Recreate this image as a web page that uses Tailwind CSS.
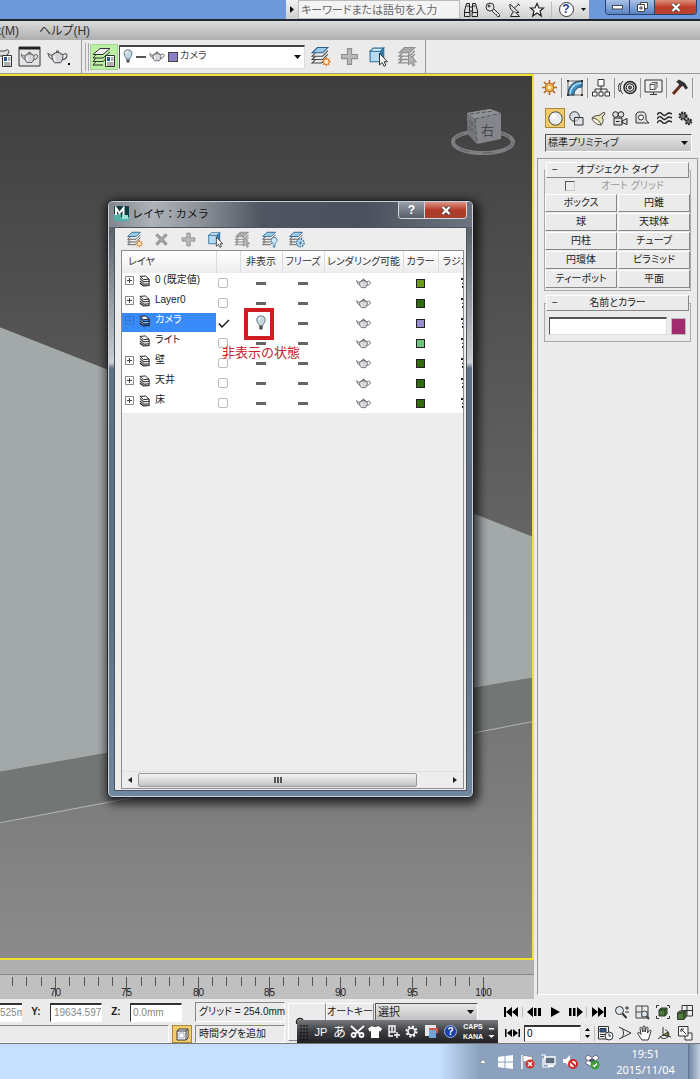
<!DOCTYPE html>
<html lang="ja">
<head>
  <meta charset="UTF-8" />
  <title>レイヤ：カメラ</title>
  <script src="https://cdn.jsdelivr.net/npm/@tailwindcss/browser@4"></script>
</head>
<body class="min-h-screen flex flex-col bg-[#ebebeb] text-[#222] text-[10px] leading-4 font-['Liberation_Sans','Noto_Sans_CJK_JP',sans-serif] [font-feature-settings:'palt']">

  <!-- shared icons -->
  <svg width="0" height="0" class="absolute" aria-hidden="true">
    <symbol id="teapot" viewBox="0 0 20 14">
      <path d="M5 5C3 6 2 4 0.8 3.2C1.5 6 2.5 8.5 5.5 9.5" fill="#d8dade" stroke="#444" stroke-width="0.9"/>
      <path d="M14.5 5.2C17 2.8 19.5 4 19 6.2C18.5 8.4 16.5 9.6 14 9.7" fill="none" stroke="#444" stroke-width="1"/>
      <path d="M5.5 4.5C7 3 13 3 14.5 4.5C16 7.5 14.5 10.5 12.8 12.5H7.2C5.5 10.5 4 7.5 5.5 4.5Z" fill="#d3d5da" stroke="#444" stroke-width="0.9"/>
      <path d="M6.5 3.8C8 2.4 12 2.4 13.5 3.8M9.2 2.4V1.2H10.8V2.4" fill="#fff" stroke="#333" stroke-width="0.9"/>
      <path d="M7 6C6.6 8 7.2 9.5 8 11" fill="none" stroke="#fff" stroke-width="1.2"/>
    </symbol>
    <symbol id="bulb" viewBox="0 0 12 18">
      <path d="M4 12C4 10 1.2 8.5 1.2 5.4C1.2 2.8 3.2 1 6 1S10.800 2.800 10.800 5.400C10.800 8.500 8 10 8 12Z" fill="#c6d8e4" stroke="#55646e" stroke-width="1"/>
      <path d="M3.500 5.500C3.500 4 4.300 3 5.600 2.800" fill="none" stroke="#fff" stroke-width="1.300"/>
      <path d="M4 12.500H8V15L6.800 16.500H5.200L4 15Z" fill="#555"/>
    </symbol>
    <symbol id="layer" viewBox="0 0 12 13">
      <path d="M1 1.500L7 1L11 4.500L5 5Z" fill="#fff" stroke="#111" stroke-width="1"/>
      <path d="M1 4L5 7.500L11 7V4.500M1 6.500L5 10L11 9.500V7M1 9L5 12L11 11.500V9.500" fill="none" stroke="#111" stroke-width="1.200"/>
      <path d="M1.500 5L5 8.200H10.500M1.500 7.600L5 10.800" fill="none" stroke="#fff" stroke-width="0.600"/>
    </symbol>
    <symbol id="sheets" viewBox="0 0 20 20">
      <path d="M7 1.500H17L12 6.500H2Z" fill="#9ccbe8" stroke="#2a5f8a" stroke-width="1"/>
      <path d="M5 6.800L2 9.700H12L17 4.500M5 10L2 12.900H12L17 7.700M5 13.200L2 16.100H11L16 11.200" fill="none" stroke="#4a4a4a" stroke-width="1"/>
    </symbol>
    <symbol id="sheets-off" viewBox="0 0 20 20">
      <path d="M7 1.500H17L12 6.500H2Z" fill="#aaa" stroke="#8d8d8d" stroke-width="1"/>
      <path d="M5 6.800L2 9.700H12L17 4.500M5 10L2 12.900H12L17 7.700M5 13.200L2 16.100H11L16 11.200" fill="none" stroke="#8d8d8d" stroke-width="1.300"/>
      <path d="M11 7V18L13.500 15.700L15.200 19.200L17 18.300L15.300 15H18.500Z" fill="#b5b5b5" stroke="#8a8a8a" stroke-width="0.900"/>
    </symbol>
    <symbol id="layer-new" viewBox="0 0 20 20">
      <use href="#sheets"/>
      <path d="M15.500 10.500V19.500M11 15H20M12.500 12L18.500 18M18.500 12L12.500 18" stroke="#d97a22" stroke-width="1"/>
      <circle cx="15.500" cy="15" r="2.600" fill="#fff2d0" stroke="#d97a22"/>
    </symbol>
    <symbol id="layer-bulb" viewBox="0 0 20 20">
      <use href="#sheets"/>
      <path d="M14.500 15.500C14.500 14 12 13 12 10.900A3.500 3.500 0 0 1 19 10.900C19 13 16.500 14 16.500 15.500V19H14.500Z" fill="#cfe6f5" stroke="#3f7ea8" stroke-width="1"/>
    </symbol>
    <symbol id="layer-snow" viewBox="0 0 20 20">
      <use href="#sheets"/>
      <circle cx="14.500" cy="14" r="4.500" fill="#cfe6f5" stroke="#3f7ea8" stroke-width="1.600" stroke-dasharray="2 1"/>
      <path d="M14.500 11V17M12 12.500L17 15.500M17 12.500L12 15.500" stroke="#3f7ea8" stroke-width="0.800"/>
    </symbol>
    <symbol id="plus" viewBox="0 0 20 20">
      <path d="M8 2.500H12V8H17.500V12H12V17.500H8V12H2.500V8H8Z" fill="#b9b9b9" stroke="#8e8e8e"/>
    </symbol>
    <symbol id="cross" viewBox="0 0 20 20">
      <path d="M4 4L16 16M16 4L4 16" stroke="#8f8f8f" stroke-width="3.600"/>
      <path d="M4.500 4.500L15.500 15.500M15.500 4.500L4.500 15.500" stroke="#a9a9a9" stroke-width="1.600"/>
    </symbol>
    <symbol id="cube-pick" viewBox="0 0 20 20">
      <path d="M2 5H12V15H2Z" fill="#b5dcf2" stroke="#2b6d9c"/>
      <path d="M2 5L5 2H15L12 5Z" fill="#dff1fa" stroke="#2b6d9c"/>
      <path d="M12 5L15 2V12L12 15Z" fill="#2f86bd" stroke="#2b6d9c"/>
      <path d="M11 7V18L13.500 15.700L15.200 19.200L17 18.300L15.300 15H18.500Z" fill="#fff" stroke="#222" stroke-width="0.900"/>
    </symbol>
    <symbol id="caret" viewBox="0 0 7 4"><path d="M0 0H7L3.500 4Z" fill="#111"/></symbol>
    <symbol id="doc" viewBox="0 0 10 12">
      <path d="M0.500 0.500H9.500V11.500H0.500Z" fill="#fff" stroke="#333"/>
      <path d="M2 2H5V6H2Z" fill="#2b5a94"/><path d="M6 3H8.500M6 5H8.500M2 8H8.500M2 10H8.500" stroke="#333" stroke-width="0.800"/>
    </symbol>
  </svg>

  <!-- title bar -->
  <header class="flex h-[21px] border-b-2 border-[#20262e] bg-[#6d98da]">
    <div class="flex-1"></div>
    <div class="flex items-center bg-linear-to-b from-[#f2f2f2] to-[#cfcfcf]">
      <button class="w-3 flex justify-center" aria-label="検索を折りたたむ"><svg width="4" height="7" viewBox="0 0 4 7"><path d="M0 0L4 3.500L0 7Z" fill="#111"/></svg></button>
      <input type="text" aria-label="検索" placeholder="キーワードまたは語句を入力" class="w-[162px] h-[19px] px-0.5 border border-[#bbb] bg-[#f3f3f3] text-[11px] placeholder:text-[#666]" />
      <button class="w-[22px] flex justify-center" aria-label="検索実行">
        <svg width="16" height="16" viewBox="0 0 16 16" fill="#ddd" stroke="#222"><path d="M3.500 1.500H6.500V6L7 14.500H1.500V9Z"/><path d="M12.500 1.500H9.500V6L9 14.500H14.500V9Z"/><path d="M6.500 5H9.500V9H6.500ZM2 10.500H7M9 10.500H14M3.500 4H6.500M9.500 4H12.500"/></svg>
      </button>
      <button class="w-[22px] flex justify-center" aria-label="サブスクリプション">
        <svg width="16" height="16" viewBox="0 0 16 16" fill="#e4e4e4" stroke="#333"><path d="M7.500 5.500L14.500 12.500V14.500H12.500L11.500 13.500V12.500H10.500L5.500 7.500"/><circle cx="5" cy="5" r="4"/><circle cx="4" cy="4" r="1" fill="#777"/></svg>
      </button>
      <button class="w-[22px] flex justify-center" aria-label="通信センター">
        <svg width="16" height="16" viewBox="0 0 16 16" fill="#ddd" stroke="#222"><path d="M3 2C2 7 6 11.500 12 10.500Z"/><path d="M7.500 6L12 2M10.500 1.500L13 3.500M6 10L3.500 14.500H12.500L9 10.500"/></svg>
      </button>
      <button class="w-[22px] flex justify-center" aria-label="お気に入り">
        <svg width="16" height="16" viewBox="0 0 16 16" fill="#fafafa" stroke="#222" stroke-width="1.200"><path d="M8 1.500L10 6H14.500L11 9L12.300 14L8 11L3.700 14L5 9L1.500 6H6Z"/></svg>
      </button>
      <div class="w-px h-4 mx-[3px] bg-[#bbb]"></div>
      <button class="w-[22px] flex justify-center" aria-label="ヘルプ">
        <span class="size-[15px] rounded-full border border-[#333] bg-white text-[#1c3f9c] text-[12px] leading-[13px] font-bold">?</span>
      </button>
      <button class="w-3 flex justify-center" aria-label="ヘルプメニュー"><svg width="5" height="3"><use href="#caret"/></svg></button>
    </div>
    <div class="flex h-[15px] ml-[16px] mr-[3px] rounded-b border border-t-0 border-[#27436e] overflow-hidden">
      <button class="w-6 flex justify-center items-center bg-linear-to-b from-[#a9c2e8] to-[#5a83c4] border-r border-[#27436e]" aria-label="最小化"><svg width="11" height="5"><rect x="0.500" y="0.500" width="10" height="3.500" fill="#fff" stroke="#444"/></svg></button>
      <button class="w-[25px] flex justify-center items-center bg-linear-to-b from-[#a9c2e8] to-[#5a83c4] border-r border-[#27436e]" aria-label="元に戻す"><svg width="11" height="10" fill="#fff" stroke="#444"><path d="M3.500 0.500H10.500V6.500H3.500Z"/><path d="M0.500 2.500H7.500V9.500H0.500Z"/><path d="M3 5H5V7H3Z"/></svg></button>
      <button class="w-[41px] flex justify-center items-center bg-linear-to-b from-[#dd8d7c] via-[#bf3d2a] to-[#b5432f]" aria-label="閉じる"><svg width="10" height="9" viewBox="0 0 10 9"><path d="M1.500 1L8.500 8M8.500 1L1.500 8" stroke="#444" stroke-width="3.600"/><path d="M1.500 1L8.500 8M8.500 1L1.500 8" stroke="#fff" stroke-width="2.200"/></svg></button>
    </div>
  </header>

  <!-- menu bar -->
  <nav class="flex h-[19px] items-center gap-5 bg-linear-to-b from-[#dcdcdc] to-[#aeaeae] text-[12px] text-[#333]">
    <button class="w-[19px] flex justify-end whitespace-nowrap overflow-hidden">t(M)</button>
    <button>ヘルプ(H)</button>
  </nav>

  <!-- main toolbar -->
  <div class="flex h-[34px] items-center border-b border-[#999] overflow-hidden">
    <div class="flex h-full w-[82px] items-center border-r border-[#999]">
      <button class="w-[18px]" aria-label="レンダリング設定">
        <svg width="13" height="22" viewBox="0 0 13 22"><path d="M0 5H5C8 2 10 5 8 8L6 10H0" fill="#ddd" stroke="#444"/><use href="#doc" x="2" y="9" width="10" height="12"/></svg>
      </button>
      <button class="w-[24px]" aria-label="レンダリング フレーム">
        <svg width="23" height="21" viewBox="0 0 23 21"><path d="M1 1H22V20H1Z" fill="#e4e4e4" stroke="#333"/><path d="M1 1H22V3.500H1Z" fill="#222"/><use href="#teapot" x="2.500" y="5" width="18" height="13"/></svg>
      </button>
      <button class="w-[32px] flex justify-center items-end" aria-label="レンダリング">
        <svg width="21" height="16"><use href="#teapot"/></svg>
        <span class="size-0.5 bg-black"></span>
      </button>
    </div>
    <div class="flex h-full flex-initial items-center gap-px pl-[3px] border-r border-[#999]">
      <div class="w-1 h-7 border-x border-[#aaa]"></div>
      <button class="w-7 h-[26px] flex justify-center items-center bg-[#bcf0a4] border border-[#a6d494]" aria-label="レイヤ管理">
        <svg width="24" height="22" viewBox="0 0 24 22"><path d="M8 2.500H18L11 8.500H1Z" fill="#eee" stroke="#333"/><path d="M4 8.500L1 12H11L18 6M4 12L1 15.500H11L18 9.500M4 15.500L1 19H11" fill="none" stroke="#333"/><use href="#doc" x="13" y="9" width="10" height="12"/></svg>
      </button>
      <div class="relative w-[186px]">
        <select aria-label="現在のレイヤ" class="appearance-none block w-full h-6 pl-[60px] pb-0.5 bg-white border border-[#ddd] border-t-2 border-t-[#444] border-l-[#444] text-[10px] text-[#444]"><option>カメラ</option></select>
        <div class="absolute inset-y-0 left-1 flex items-center gap-[3px] pointer-events-none">
          <svg width="10" height="15"><use href="#bulb"/></svg>
          <span class="w-2.5 h-0.5 bg-[#555]"></span>
          <svg width="16" height="11"><use href="#teapot"/></svg>
          <span class="size-[10px] bg-[#8a80c8] border border-[#444]"></span>
        </div>
        <svg class="absolute right-1 top-2.5 pointer-events-none" width="7" height="4"><use href="#caret"/></svg>
      </div>
      <div class="flex pr-[3px]">
        <button class="w-[29px] flex justify-center" aria-label="新規レイヤ"><svg width="21" height="21"><use href="#layer-new"/></svg></button>
        <button class="w-[29px] flex justify-center" aria-label="レイヤに追加"><svg width="21" height="21"><use href="#plus"/></svg></button>
        <button class="w-[29px] flex justify-center" aria-label="オブジェクトを選択"><svg width="21" height="21"><use href="#cube-pick"/></svg></button>
        <button class="w-[29px] flex justify-center" aria-label="レイヤを設定"><svg width="21" height="21"><use href="#sheets-off"/></svg></button>
      </div>
    </div>
  </div>

  <main class="flex flex-1">
    <div class="flex-1 min-w-0 flex flex-col">
      <!-- viewport -->
      <div class="relative flex-1 min-h-[884px] border-2 border-l-0 border-[#f0e030] overflow-hidden">
        <svg class="absolute inset-0 size-full" viewBox="0 76 532 881" preserveAspectRatio="none">
          <defs>
            <linearGradient id="sky" x1="0" y1="0" x2="0" y2="1"><stop offset="0" stop-color="#3e3e3e"/><stop offset="0.500" stop-color="#636363"/><stop offset="1" stop-color="#8b8b8b"/></linearGradient>
          </defs>
          <path d="M0 76H532V957H0Z" fill="url(#sky)"/>
          <path d="M0 327L532 536V677L0 771Z" fill="#a3a8a9"/>
          <path d="M0 771L532 677V721L0 822Z" fill="#727675"/>
          <path d="M0 822L532 721" stroke="#b4b6b6"/>
        </svg>

        <!-- view cube -->
        <svg class="absolute top-[29px] right-[14px]" width="70" height="52" viewBox="0 0 70 52">
          <ellipse cx="35" cy="37" rx="30" ry="11" fill="none" stroke="#7c7e82" stroke-width="4"/>
          <ellipse cx="35" cy="37" rx="30" ry="11" fill="none" stroke="#5d5f63" stroke-width="1" stroke-dasharray="10 14"/>
          <path d="M19 8L42 4L53 8V34L29 39L20 29Z" fill="#84868b"/>
          <path d="M19 8L42 4L53 8L27 14Z" fill="#8f9196"/>
          <path d="M19 8L27 14L29 39L20 29Z" fill="#74767b"/>
          <path d="M27 14L53 8M27 14L29 39M22 9L46 6M22 15V25M24 17V27" stroke="#56585d" stroke-dasharray="4 2"/>
          <text x="33" y="30" font-size="13" fill="#45474c">右</text>
        </svg>

        <!-- layer dialog -->
        <section class="absolute left-[107px] top-[124px] w-[367px] h-[598px] flex flex-col rounded-md border border-[#222] p-px bg-[#c9d2dc] shadow-[2px_3px_10px_3px_#000000b0]">
          <div class="flex-1 min-h-0 flex flex-col px-[5px] pb-[5px] rounded bg-[linear-gradient(#6a7078,#5c646e_5%,#c4c8cc_26%,#d0d4d8_27%,#5f7186_28%,#607086_70%,#6f87a0_100%)]">
            <header class="-mx-[5px] flex h-[25px] items-start pl-[5px] pr-[5px] rounded-t bg-[linear-gradient(90deg,#80868e,#aeb3b9_12%,#8c9199_25%,#4e5661_42%,#4a515c_70%,#6b7480_100%)]">
              <svg class="mt-1" width="15" height="15" viewBox="0 0 15 15"><path d="M0 0H15V15H0Z" fill="#123c40"/><path d="M0 8H7V15H0ZM7 11H15V15H7Z" fill="#4fb0a5"/><path d="M2 9V2L5.500 7L9.500 2V9" fill="none" stroke="#fff" stroke-width="2"/><path d="M8 9H14V13H8Z" fill="#9be0d5"/></svg>
              <h1 class="flex-1 ml-[3px] mt-1 text-[11px] text-[#111] [font-feature-settings:normal]">レイヤ：カメラ</h1>
              <div class="flex h-[17px] rounded-b border border-t-0 border-[#d5d9de] overflow-hidden">
                <button class="w-[26px] bg-linear-to-b from-[#9aa0a8] to-[#565d67] text-white text-[12px] font-bold border-r border-[#d5d9de]" aria-label="ヘルプ">?</button>
                <button class="w-[41px] flex justify-center items-center bg-linear-to-b from-[#dd9485] via-[#b23a28] to-[#a3402f]" aria-label="閉じる"><svg width="10" height="9" viewBox="0 0 10 9"><path d="M1.500 1L8.500 8M8.500 1L1.500 8" stroke="#444" stroke-width="3.600"/><path d="M1.500 1L8.500 8M8.500 1L1.500 8" stroke="#fff" stroke-width="2.200"/></svg></button>
              </div>
            </header>

            <div class="flex-1 min-h-0 flex flex-col border border-[#4b535d] bg-[#ededed] pl-[6px] pr-[2px] pb-px">
              <div class="flex h-[22px] items-center">
                <button class="w-[27px] flex justify-center" aria-label="新規レイヤを作成"><svg width="17" height="17"><use href="#layer-new"/></svg></button>
                <button class="w-[27px] flex justify-center" aria-label="空のレイヤを削除"><svg width="17" height="17"><use href="#cross"/></svg></button>
                <button class="w-[27px] flex justify-center" aria-label="選択オブジェクトを追加"><svg width="17" height="17"><use href="#plus"/></svg></button>
                <button class="w-[27px] flex justify-center" aria-label="オブジェクトを選択"><svg width="17" height="17"><use href="#cube-pick"/></svg></button>
                <button class="w-[27px] flex justify-center" aria-label="レイヤをハイライト"><svg width="17" height="17"><use href="#sheets-off"/></svg></button>
                <button class="w-[27px] flex justify-center" aria-label="すべて非表示"><svg width="17" height="17"><use href="#layer-bulb"/></svg></button>
                <button class="w-[27px] flex justify-center" aria-label="すべてフリーズ"><svg width="17" height="17"><use href="#layer-snow"/></svg></button>
              </div>

              <div class="relative flex-1 min-h-0 flex flex-col border border-[#8a8e94] overflow-hidden">
                <table class="table-fixed w-full bg-white">
                  <colgroup><col class="w-[94px]"><col class="w-6"><col class="w-[42px]"><col class="w-[42px]"><col class="w-[79px]"><col class="w-[35px]"><col></colgroup>
                  <thead class="bg-linear-to-b from-white to-[#ececec]">
                    <tr class="h-[22px] text-[#333] whitespace-nowrap">
                      <th class="font-normal text-left pl-1.5 border-r border-[#ddd]">レイヤ</th>
                      <th class="border-r border-[#ddd]"></th>
                      <th class="font-normal border-r border-[#ddd]">非表示</th>
                      <th class="font-normal border-r border-[#ddd]">フリーズ</th>
                      <th class="font-normal border-r border-[#ddd]">レンダリング可能</th>
                      <th class="font-normal border-r border-[#ddd]">カラー</th>
                      <th class="font-normal text-left pl-1 overflow-hidden">ラジオ</th>
                    </tr>
                  </thead>
                  <tbody id="layers"></tbody>
                </table>

                <div class="flex-1"></div>
                <!-- horizontal scroll bar -->
                <div class="flex h-[17px] items-center px-1.5 gap-1.5 border-t border-[#e2e2e2]">
                  <svg width="4" height="6" viewBox="0 0 4 6"><path d="M4 0L0 3L4 6Z" fill="#222"/></svg>
                  <div class="w-[279px] h-3.5 flex justify-center items-center gap-px border border-[#999] rounded-xs bg-linear-to-b from-[#f2f2f2] via-[#dcdcdc] to-[#bfc1c5]">
                    <span class="w-0.5 h-1.5 bg-[#555]"></span><span class="w-0.5 h-1.5 bg-[#555]"></span><span class="w-0.5 h-1.5 bg-[#555]"></span>
                  </div>
                  <svg class="ml-auto" width="4" height="6" viewBox="0 0 4 6"><path d="M0 0L4 3L0 6Z" fill="#222"/></svg>
                </div>

                <!-- callout -->
                <div class="absolute left-[122px] top-[57px] w-[30px] h-[32px] border-4 border-[#cc1c24]"></div>
                <p class="absolute left-[100px] top-[94px] text-[13px] leading-4 text-[#c8202c] whitespace-nowrap [font-feature-settings:normal]">非表示の状態</p>
              </div>
            </div>
          </div>
        </section>
      </div>

      <!-- time slider and track bar -->
      <div class="h-[15px] bg-[#afafaf] border-b border-[#888]"></div>
      <svg class="w-full bg-[#c0c0c0]" height="24" viewBox="0 975 534 24" preserveAspectRatio="xMinYMin slice">
        <g id="ticks" stroke="#555"></g>
        <g id="labels" font-size="10" fill="#222" text-anchor="middle"></g>
      </svg>
    </div>

    <!-- command panel -->
    <aside class="w-[166px] flex flex-col pl-[3px] bg-[#ebebeb]">
      <div class="flex h-[25px] items-center pt-0.5">
        <button class="w-[25px] h-5 flex justify-center items-center border-r border-[#999]" aria-label="作成"><svg width="17" height="17" viewBox="0 0 17 17"><path d="M8.500 1V16M1 8.500H16M3 3L14 14M14 3L3 14" stroke="#b5651d" stroke-width="1.600"/><circle cx="8.500" cy="8.500" r="4.200" fill="#f0b050" stroke="#b5651d"/><circle cx="8.500" cy="8.500" r="1.800" fill="#fff0b0"/></svg></button>
        <button class="w-[26px] h-5 flex justify-center items-center border-r border-[#999]" aria-label="修正"><svg width="18" height="18" viewBox="0 0 18 18"><path d="M2 16C2 7 7 2 16 2V8C11 8 8 11 8 16Z" fill="#3f8ec4" stroke="#1c3f5c"/><path d="M4 16C4 9 9 4 16 4" fill="none" stroke="#b0dcf4" stroke-width="1.500"/><path d="M2 2H16V16H2Z" fill="none" stroke="#444" stroke-width="0.800"/><path d="M1 1H3V3H1ZM15 1H17V3H15ZM1 15H3V17H1ZM15 15H17V17H15Z" fill="#333"/></svg></button>
        <button class="w-[27px] h-5 flex justify-center items-center border-r border-[#999]" aria-label="階層"><svg width="18" height="18" viewBox="0 0 18 18" fill="#fff" stroke="#333"><path d="M9 7V10M3 13V10H15V13M9 10V13" fill="none"/><path d="M6 0.500H12V7H6ZM0.500 13H5V17H0.500ZM7 13H11V17H7ZM13 13H17.500V17H13Z"/></svg></button>
        <button class="w-[26px] h-5 flex justify-center items-center border-r border-[#999]" aria-label="モーション"><svg width="19" height="17" viewBox="0 0 19 17" fill="none" stroke="#222"><circle cx="12" cy="8.500" r="6" fill="#ccc" stroke-width="1.500"/><circle cx="12" cy="8.500" r="3.800" fill="#eee"/><circle cx="12" cy="8.500" r="1.500" fill="#777"/><path d="M5 2C1.500 5 1.500 12 5 15M2 4C0 7 0 10 2 13"/></svg></button>
        <button class="w-[26px] h-5 flex justify-center items-center border-r border-[#999]" aria-label="表示"><svg width="19" height="17" viewBox="0 0 19 17" fill="#eee" stroke="#333"><path d="M1 1H18V13H1ZM6 15.500H13M9.500 13V15"/><path d="M6 5.500L8 3.500H13V8.500L11 10.500H6ZM6 5.500H11V10.500M11 5.500L13 3.500" stroke-width="0.800"/></svg></button>
        <button class="w-[26px] h-5 flex justify-center items-center border-r border-[#999]" aria-label="ユーティリティ"><svg width="18" height="17" viewBox="0 0 18 17"><path d="M10 6L2 15" stroke="#6b2f1c" stroke-width="3"/><path d="M5 3L8 0.500L14 4L17 9L14.500 10.500L12 7L9 7.500L7 4Z" fill="#333"/></svg></button>
      </div>

      <div class="flex h-[33px] items-end pl-2 pb-1">
        <button class="w-5 h-5 flex justify-center items-center bg-[#f3cb68] border border-[#a88a3c]" aria-label="ジオメトリ"><svg width="15" height="15"><circle cx="7.500" cy="7.500" r="6.700" fill="#e9edf0" stroke="#444"/><circle cx="5.500" cy="5" r="2.500" fill="#fff"/></svg></button>
        <button class="w-[23px] h-5 flex justify-center items-center" aria-label="シェイプ"><svg width="15" height="15" fill="#d5dce2" stroke="#333"><circle cx="5.500" cy="5.500" r="4.800"/><path d="M5.500 6.500H14V14H5.500Z" fill-opacity="0.600"/></svg></button>
        <button class="w-[21px] h-5 flex justify-center items-center" aria-label="ライト"><svg width="15" height="15" viewBox="0 0 15 15"><path d="M13 1L14 3L11 6C13 9 12 12 10 14L1 7C4 4 6 5 9 4Z" fill="#e7e2b8" stroke="#444"/><path d="M1 7C1 10 6 14 10 14C9 10 5 7 1 7Z" fill="#fffbe0" stroke="#444"/></svg></button>
        <button class="w-[22px] h-5 flex justify-center items-center" aria-label="カメラ"><svg width="16" height="15" viewBox="0 0 16 15" fill="#ddd" stroke="#222"><circle cx="3.500" cy="3.500" r="2.800"/><circle cx="9" cy="3.500" r="2.800"/><path d="M2 7H10V14H2ZM10 10L15 7.500V13.500L10 11.500ZM4 10.500H7.500"/></svg></button>
        <button class="w-[22px] h-5 flex justify-center items-center" aria-label="ヘルパー"><svg width="15" height="14" viewBox="0 0 15 14" fill="#ddd" stroke="#333"><path d="M1 11V3L3 1H8C10 1 11 3 11 5V9L14 12H1Z"/><circle cx="6" cy="6.500" r="2.500" fill="#fff"/></svg></button>
        <button class="w-[22px] h-5 flex justify-center items-center" aria-label="スペース ワープ"><svg width="15" height="13" viewBox="0 0 15 13" fill="none" stroke="#222" stroke-width="1.500"><path d="M0 3C2 0 3 0 5 2S8 4 10 2S13 1 15 2M0 7C2 4 3 4 5 6S8 8 10 6S13 5 15 6M0 11C2 8 3 8 5 10S8 12 10 10S13 9 15 10"/></svg></button>
        <button class="w-[21px] h-5 flex justify-center items-center" aria-label="システム"><svg width="15" height="15" viewBox="0 0 15 15"><circle cx="5" cy="5" r="3.300" fill="#777" stroke="#222" stroke-width="2.400" stroke-dasharray="1.700 1"/><circle cx="10.500" cy="10.500" r="2.600" fill="#777" stroke="#222" stroke-width="2.400" stroke-dasharray="1.700 1"/></svg></button>
      </div>

      <div class="relative mt-0.5 ml-2 mr-2">
        <select aria-label="プリミティブの種類" class="appearance-none block w-full h-[18px] pl-0.5 border border-[#fff] border-t-[#555] border-l-[#555] bg-linear-to-b from-[#e6e6e6] to-[#c2c2c2] text-[10px] leading-4"><option>標準プリミティブ</option></select>
        <svg class="absolute right-1 top-[7px] pointer-events-none" width="7" height="4"><use href="#caret"/></svg>
      </div>

      <div class="flex-1 min-w-0 mt-[6px] mb-1 mr-0.5 px-1 pt-[3px] border border-[#999] border-b-white">
        <fieldset class="min-w-0 border border-[#aaa] mx-0.5 pb-0.5">
          <legend class="flex w-[calc(100%-2px)] mx-auto h-4 items-center bg-[#ebebeb] border border-white border-r-[#888] border-b-[#888]">
            <span class="w-4 text-center">−</span><span class="flex-1 text-center pr-4">オブジェクト タイプ</span>
          </legend>
          <label class="flex h-4 items-center pl-5 text-[#999]">
            <input type="checkbox" disabled class="appearance-none size-2.5 bg-[#ebebeb] border border-[#ccc] border-t-[#555] border-l-[#555]" />
            <span class="flex-1 text-center">オート グリッド</span>
          </label>
          <div class="grid grid-cols-2 gap-px *:h-[18px] *:border *:border-white *:border-r-[#888] *:border-b-[#888]">
            <button>ボックス</button><button>円錐</button>
            <button>球</button><button>天球体</button>
            <button>円柱</button><button>チューブ</button>
            <button>円環体</button><button>ピラミッド</button>
            <button>ティーポット</button><button>平面</button>
          </div>
        </fieldset>
        <fieldset class="min-w-0 border border-[#aaa] mx-0.5 mt-1">
          <legend class="flex w-[calc(100%-2px)] mx-auto h-4 items-center bg-[#ebebeb] border border-white border-r-[#888] border-b-[#888]">
            <span class="w-4 text-center">−</span><span class="flex-1 text-center pr-4">名前とカラー</span>
          </legend>
          <div class="flex h-[30px] items-center gap-1 px-1">
            <input type="text" aria-label="名前" class="flex-1 w-0 min-w-0 h-[18px] bg-white border border-[#ddd] border-t-2 border-t-[#555] border-l-[#555]" />
            <button class="w-[15px] h-[17px] bg-[#a02c6e] border border-[#bbb]" aria-label="オブジェクト カラー"></button>
          </div>
        </fieldset>
      </div>
    </aside>
  </main>

  <!-- status bar -->
  <footer class="relative flex h-[45px] border-b border-[#777]">
    <div class="flex-1 min-w-0 flex flex-col gap-[3px] pt-[3px]">
      <div class="flex h-5 items-center">
        <input type="text" aria-label="X" value="525m" class="flex-1 w-0 min-w-0 h-[19px] bg-white border-y border-white border-t-2 border-t-[#333] text-[#888]" />
        <label for="posY" class="w-[28px] text-center font-bold">Y:</label>
        <input id="posY" type="text" value="19634.597" class="w-[52px] h-[19px] pl-[3px] bg-white border border-white border-t-2 border-t-[#333] border-l-[#333] text-[#888]" />
        <label for="posZ" class="w-[28px] text-center font-bold">Z:</label>
        <input id="posZ" type="text" value="0.0mm" class="w-[52px] h-[19px] pl-[2px] bg-white border border-white border-t-2 border-t-[#333] border-l-[#333] text-[#888]" />
        <div class="w-[90px] h-5 ml-[13px] pl-[3px] border border-white border-t-[#888] border-l-[#888] leading-[18px] whitespace-nowrap">グリッド = 254.0mm</div>
      </div>
      <div class="flex h-[18px] items-center">
        <div class="flex-1 h-full border border-white border-t-[#888] border-l-0"></div>
        <button class="w-5 h-full ml-[3px] mr-[3px] flex justify-center items-center bg-[#f3cb68] border border-[#a88a3c]" aria-label="適応分解"><svg width="13" height="13" viewBox="0 0 13 13" fill="#fff" stroke="#333"><path d="M1 3L3 1H12V10L10 12H1ZM1 3H10V12M10 3L12 1"/><path d="M3 5H8V10H3Z" stroke="#9ab"/></svg></button>
        <div class="w-[90px] h-full pl-[3px] border border-white border-t-[#888] border-l-[#888] leading-4 whitespace-nowrap">時間タグを追加</div>
      </div>
    </div>

    <div class="w-[216px] flex items-start pt-1 pl-[3px]">
      <button class="w-[38px] h-[38px] border border-white border-r-[#888] border-b-[#888]" aria-label="キーを設定"><svg class="ml-1 -mt-4" width="28" height="20" viewBox="0 0 28 20" fill="none" stroke="#222" stroke-width="1.500"><circle cx="7" cy="18" r="3.500"/><path d="M10 17H24"/></svg></button>
      <button class="w-[48px] h-[18px] border border-white border-r-[#888] border-b-[#888] leading-4 whitespace-nowrap">オートキー</button>
      <div class="relative w-[103px] ml-px">
        <select aria-label="キー フィルタ" class="appearance-none block w-full h-[18px] pl-0.5 border border-white border-t-[#555] border-l-[#555] bg-linear-to-b from-[#e6e6e6] to-[#c2c2c2] text-[11px] leading-4"><option>選択</option></select>
        <svg class="absolute right-1 top-[7px] pointer-events-none" width="7" height="4"><use href="#caret"/></svg>
      </div>
    </div>

    <div class="w-[199px] flex flex-col pt-[3px] gap-px text-black">
      <div class="flex h-5 items-center">
        <button class="w-[21px] flex justify-center" aria-label="開始へ"><svg width="15" height="10" viewBox="0 0 15 10"><path d="M0 0H2V10H0ZM8 0V10L2 5ZM14 0V10L8 5Z"/></svg></button>
        <button class="w-6 flex justify-center border-l border-[#bbb]" aria-label="前のフレーム"><svg width="15" height="10" viewBox="0 0 15 10"><path d="M6 0V10L0 5ZM7 1H9.500V9H7ZM11 1H14V9H11Z"/></svg></button>
        <button class="w-[18px] flex justify-center" aria-label="再生"><svg width="9" height="10"><path d="M0 0L9 5L0 10Z"/></svg></button>
        <button class="w-[22px] flex justify-center" aria-label="次のフレーム"><svg width="15" height="10" viewBox="0 0 15 10"><path d="M9 0V10L15 5ZM5 1H7.500V9H5ZM1 1H3.500V9H1Z"/></svg></button>
        <button class="w-6 flex justify-center border-l border-[#bbb]" aria-label="終了へ"><svg width="15" height="10" viewBox="0 0 15 10"><path d="M13 0H15V10H13ZM7 0V10L13 5ZM1 0V10L7 5Z"/></svg></button>
        <button class="w-[22px] flex justify-center" aria-label="ズーム"><svg width="15" height="15" fill="#dde6ec" stroke="#333"><path d="M8 8L12.500 13" stroke-width="2"/><circle cx="5.500" cy="5.500" r="4"/><path d="M11 3H15M13 1V5M11 7H15"/></svg></button>
        <button class="w-[21px] flex justify-center" aria-label="すべてズーム"><svg width="15" height="15" fill="#e8e8e8" stroke="#444"><path d="M1 1H13V13H1ZM7 1V13M1 7H13"/><circle cx="9.500" cy="9" r="3" fill="#dde6ec"/><path d="M11.500 11L14 14" stroke-width="2"/></svg></button>
        <button class="w-5 flex justify-center" aria-label="全範囲ズーム"><svg width="15" height="15" viewBox="0 0 15 15" stroke="#333"><path d="M0.500 3V0.500H3M11 0.500H13.500V3M0.500 11V13.500H3M11 13.500H13.500V11" fill="none"/><path d="M3 5L5 3H11V9L9 11H3Z" fill="#4f7a3c"/><path d="M3 5H9V11M9 5L11 3" fill="none" stroke="#1f3a14"/></svg></button>
        <button class="w-[23px] flex justify-center" aria-label="全ビューズーム"><svg width="16" height="15" viewBox="0 0 16 15" stroke="#333"><path d="M5 0.500H15.500V11H5ZM10 0.500V11M5 5.500H15.500" fill="#eee"/><path d="M0.500 8L2.500 6H9V12L7 14.500H0.500Z" fill="#4f7a3c"/><path d="M0.500 8H7V14M7 8L9 6" fill="none" stroke="#1f3a14"/></svg></button>
      </div>
      <div class="flex h-5 items-center">
        <button class="w-[23px] flex justify-center" aria-label="キー モード"><svg width="15" height="8" viewBox="0 0 15 8"><path d="M0 0H1.500V8H0ZM7 0V8L2 4ZM8 0V8L13 4ZM13.500 0H15V8H13.500Z"/></svg></button>
        <input type="text" aria-label="現在のフレーム" value="0" class="w-[57px] h-[17px] pl-0.5 bg-white border border-[#ddd] border-t-2 border-t-[#333] border-l-[#333]" />
        <div class="w-[13px] flex flex-col items-center gap-1"><svg width="5" height="3"><path d="M0 3H5L2.500 0Z"/></svg><svg width="5" height="3"><path d="M0 0H5L2.500 3Z"/></svg></div>
        <button class="w-[22px] flex justify-center border-l border-[#bbb]" aria-label="時間設定"><svg width="16" height="15" viewBox="0 0 16 15" stroke="#333"><path d="M0.500 0.500H10.500V13H0.500Z" fill="#eee"/><path d="M2 2.500H8V6H2Z" fill="#2b5a94"/><path d="M2 8.500H7M2 10.500H6"/><circle cx="11" cy="10" r="4" fill="#eef4f8"/><path d="M11 7.500V10H13" fill="none"/></svg></button>
        <button class="w-[18px] flex justify-center" aria-label="視野"><svg width="15" height="14" viewBox="0 0 15 14" fill="none" stroke="#333"><path d="M1 1L13 7L1 13M4 2.500C6 5 6 9 4 11.500"/></svg></button>
        <button class="w-[21px] flex justify-center" aria-label="画面移動"><svg width="15" height="16" viewBox="0 0 15 16"><path d="M5 15C3 12 1 9.500 0.700 8C1 6.700 2.500 7.500 4 9.500L3 3.500C3 2 4.500 2 5 3.500L6 7V2C6 0.500 8 0.500 8 2V7L9.300 2.800C9.800 1.500 11.200 2 11 3.500L10.500 8L12.500 5.500C13.500 4.800 14.300 5.500 13.800 6.800C12.500 10 12.500 12 11 15Z" fill="#fff" stroke="#333"/></svg></button>
        <button class="w-[20px] flex justify-center" aria-label="オービット"><svg width="16" height="15" viewBox="0 0 16 15" fill="none" stroke="#333"><path d="M6 9V1M6 9L1 13M6 9L14 11"/><path d="M3 10C4 13 10 14 12 9C12 6 10 4 8 4"/><path d="M6 9L11 6V10Z" fill="#9c9a3c"/></svg></button>
        <button class="w-[21px] flex justify-center" aria-label="最大化"><svg width="15" height="15" viewBox="0 0 15 15" fill="#f4f4f4" stroke="#333"><path d="M7 7H14V14H7Z"/><path d="M0.500 0.500H10V10H0.500Z"/><path d="M3 6V3H6M3 3L8 8"/></svg></button>
      </div>
    </div>

    <!-- language bar -->
    <div class="absolute right-[202px] bottom-0 h-[23px] w-[201px] flex items-center bg-linear-to-b from-[#77797c] via-[#3c3e42] to-[#202226] text-white">
      <svg width="14" height="18" viewBox="0 0 14 18"><path d="M4 2V18M7 2V18M10 2V18" stroke="#111" stroke-width="1.500" stroke-dasharray="1.500 2"/></svg>
      <button class="w-[20px] text-[11px]">JP</button>
      <button class="w-[17px] text-[13px]">あ</button>
      <button class="w-[18px] flex justify-center" aria-label="手書き"><svg width="15" height="13" viewBox="0 0 15 13" fill="none" stroke="#fff" stroke-width="1.800"><path d="M1 1L10 9M14 1L5 9"/><circle cx="3.500" cy="10" r="2"/><circle cx="11.500" cy="10" r="2"/></svg></button>
      <button class="w-[18px] flex justify-center" aria-label="スキン"><svg width="14" height="12" viewBox="0 0 14 12" fill="#fff"><path d="M4 0C5 1.500 9 1.500 10 0L14 2.500L12.500 5.500L11 5V12H3V5L1.500 5.500L0 2.500Z"/></svg></button>
      <button class="w-[18px] flex justify-center" aria-label="単語登録"><svg width="13" height="13" viewBox="0 0 13 13" fill="none" stroke="#fff" stroke-width="1.400"><path d="M2 1H8V7H2ZM2 7V11H6M4 3H6M4 5H6M7 10H13M10 7V13"/></svg></button>
      <button class="w-[18px] flex justify-center" aria-label="設定"><svg width="13" height="13" viewBox="0 0 13 13" fill="none" stroke="#fff"><circle cx="6.500" cy="6.500" r="5" stroke-width="2" stroke-dasharray="2 1.900"/><circle cx="6.500" cy="6.500" r="3.500" stroke-width="1.500"/></svg></button>
      <button class="w-[22px] flex justify-center" aria-label="パッド"><svg width="15" height="15" viewBox="0 0 15 15"><path d="M1 1H12V12H1Z" fill="#e6e6e6"/><path d="M5 4H14V9H5Z" fill="#d6574f"/><path d="M5 6H12V14H5Z" fill="#6fa8d8"/></svg></button>
      <button class="w-[17px] flex justify-center" aria-label="ヘルプ"><span class="size-[13px] rounded-full bg-[#1a3fa8] border border-[#9ab4ec] text-[10px] leading-[11px] font-bold">?</span></button>
      <div class="w-[28px] text-[7px] leading-[10px] font-bold text-center">CAPS<br>KANA</div>
      <svg width="8" height="16" viewBox="0 0 8 16" fill="#fff"><path d="M2 4H7V5.500H2ZM1.500 11H7.500L4.500 14Z"/></svg>
    </div>
  </footer>

  <!-- taskbar -->
  <div class="flex h-[35px] bg-[#c5dffd]">
    <div class="flex-1"></div>
    <div class="flex items-center bg-[linear-gradient(90deg,#c5dffd,#8ba1bd_40px)] pl-[32px]">
      <button class="w-[22px] flex justify-center" aria-label="隠れているインジケーター"><svg width="8" height="5"><path d="M0.500 4.500H7.500L4 0.500Z" fill="#fff" stroke="#55657a" stroke-width="0.500"/></svg></button>
      <button class="w-[22px] flex justify-center" aria-label="Windows"><svg width="15" height="14" viewBox="0 0 15 14" fill="#fff"><path d="M0 2L6.500 1V6.500H0ZM7.500 1L15 0V6.500H7.500ZM0 7.500H6.500V13L0 12ZM7.500 7.500H15V14L7.500 13Z"/></svg></button>
      <button class="w-[22px] flex justify-center" aria-label="アクション センター"><svg width="15" height="15" viewBox="0 0 15 15"><path d="M2 1V15" stroke="#fff" stroke-width="1.500"/><path d="M3 2C6 0 8 4 12 2V8C8 10 6 6 3 8Z" fill="#fff" stroke="#667" stroke-width="0.500"/><circle cx="10" cy="10" r="4.500" fill="#d22f28"/><path d="M8 8L12 12M12 8L8 12" stroke="#fff" stroke-width="1.500"/></svg></button>
      <button class="w-[21px] flex justify-center" aria-label="ネットワーク"><svg width="15" height="15" viewBox="0 0 15 15"><path d="M4 3H14V10H4Z" fill="#5a6c82" stroke="#fff" stroke-width="1.300"/><path d="M0 1H4V5H2V13H9" fill="none" stroke="#fff" stroke-width="1.200"/><path d="M7 12H13" stroke="#fff" stroke-width="2"/></svg></button>
      <button class="w-[22px] flex justify-center" aria-label="ボリューム"><svg width="15" height="15" viewBox="0 0 15 15"><path d="M0 5H3L7 1V13L3 9H0Z" fill="#fff"/><circle cx="10" cy="10" r="4" fill="#fff" stroke="#cf2a24" stroke-width="2"/><path d="M7.500 7.500L12.500 12.500" stroke="#cf2a24" stroke-width="2"/></svg></button>
      <button class="w-[22px] flex justify-center" aria-label="Dropbox"><svg width="16" height="16" viewBox="0 0 16 16"><path d="M4 1L8 3.500L12 1L15 4L12 6.500L15 9L8 13L1 9L4 6.500L1 4Z" fill="#fff" stroke="#445" stroke-width="0.700"/><path d="M4 6.500L8 4L12 6.500L8 9Z" fill="#556"/><circle cx="11" cy="11" r="4.500" fill="#3a9a3c"/><path d="M9 11L10.500 12.500L13 9.500" fill="none" stroke="#fff" stroke-width="1.300"/></svg></button>
      <div class="w-[85px] text-center text-white text-[11px] leading-4 font-['Noto_Sans',sans-serif]"><time>19:51</time><br><time>2015/11/04</time></div>
      <button class="w-3 h-full border-l border-[#5f7590] bg-linear-to-r from-[#7088a5] to-[#c3d0e0]" aria-label="デスクトップの表示"></button>
    </div>
  </div>

  <script>
    const layers = [
      { name: '0 (既定値)', color: '#6b9a1c', expand: true },
      { name: 'Layer0', color: '#2f6a0c', expand: true },
      { name: 'カメラ', color: '#9a8cd0', expand: true, current: true },
      { name: 'ライト', color: '#6ec47c', expand: false },
      { name: '壁', color: '#2f6a0c', expand: true },
      { name: '天井', color: '#2f6a0c', expand: true },
      { name: '床', color: '#2f6a0c', expand: true }
    ];
    const dash = '<span class="block w-2.5 h-[3px] mx-auto bg-[#666]"></span>';

    document.getElementById('layers').innerHTML = layers.map(l => `
      <tr class="h-5">
        <td class="align-top">
          <div class="flex h-[19px] items-start gap-[5px] pl-[3px] ${l.current ? 'bg-[#3a8bfa] text-white' : ''}">
            <svg class="mt-[3px] ${l.expand ? '' : 'invisible'}" width="9" height="9"><path d="M0.5 0.5H8.5V8.5H0.5Z" fill="${l.current ? 'none' : '#fff'}" stroke="${l.current ? '#3474cc' : '#888'}"/><path d="M2 4.5H7M4.500 2V7" stroke="${l.current ? '#3474cc' : '#444'}"/></svg>
            <svg class="mt-[2px]" width="11" height="12"><use href="#layer"/></svg>
            <span class="-mt-px">${l.name}</span>
          </div>
        </td>
        <td>${l.current
          ? '<svg class="ml-[2px]" width="12" height="9" viewBox="0 0 12 9"><path d="M1 4.5L4 8L11 1" fill="none" stroke="#111" stroke-width="1.400"/></svg>'
          : `<input type="checkbox" aria-label="${l.name}" class="appearance-none block ml-[2px] size-2.5 rounded-xs border border-[#bbb] bg-white" />`}</td>
        <td>${l.current ? '<svg class="mx-auto" width="12" height="16"><use href="#bulb"/></svg>' : dash}</td>
        <td>${dash}</td>
        <td><svg class="mx-auto" width="15" height="11"><use href="#teapot"/></svg></td>
        <td><span class="block size-[9px] mx-auto border border-[#222]" style="background:${l.color}"></span></td>
        <td class="overflow-hidden"><svg class="ml-auto" width="2" height="12"><path d="M0 1H2V3H0ZM1 6H2V7H1ZM1 9H2V11H1Z" fill="#222"/></svg></td>
      </tr>`).join('');

    // one tick per frame, a longer one with its number every 5 frames
    let ticks = '', labels = '';
    for (let f = 67; f <= 100; f++) {
      const x = Math.round(56 + (f - 70) * 14.27) - 0.5;
      ticks += `<path d="M${x} 977V${f % 5 ? 986 : 997}"/>`;
      if (f % 5 === 0) labels += `<text x="${x}" y="996">${f}</text>`;
    }
    document.getElementById('ticks').innerHTML = ticks;
    document.getElementById('labels').innerHTML = labels;
  </script>
</body>
</html>
